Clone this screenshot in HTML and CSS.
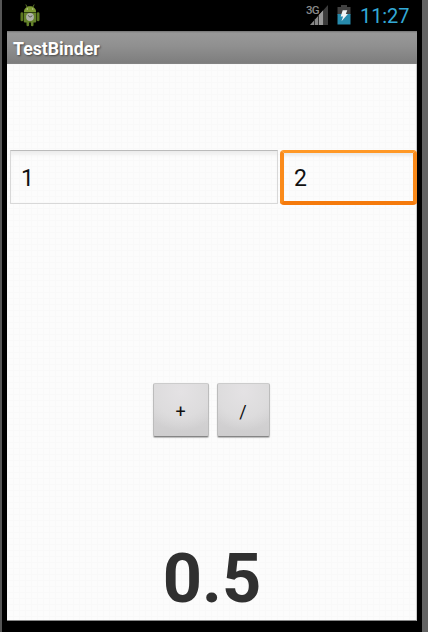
FILE: index.html
```html
<!DOCTYPE html>
<html lang="en">
<head>
<meta charset="utf-8">
<title>TestBinder</title>
<link rel="stylesheet" href="styles.css">
</head>
<body>
<div class="device">
  <header class="status">
    <svg class="robot" width="20" height="24" viewBox="0 0 20 24">
      <path d="M5.800 .5l1.500 3M14.200 .5l-1.500 3" stroke="#5c7228" stroke-width="1"/>
      <path d="M4 7.900C4 .5 16 .5 16 7.900z" fill="#7d9a33"/>
      <circle cx="7.300" cy="5" r=".7" fill="#c0cba6"/><circle cx="12.700" cy="5" r=".7" fill="#c0cba6"/>
      <rect x="0.500" y="8.300" width="2.800" height="9" rx="1.400" fill="#5b7720"/>
      <rect x="16.700" y="8.300" width="2.800" height="9" rx="1.400" fill="#5b7720"/>
      <path d="M3.800 8.500h12.400v9q0 1-1 1h-1.700v2.500q0 1.300-1.300 1.300t-1.300-1.300v-2.500h-1.800v2.500q0 1.300-1.300 1.300t-1.300-1.300v-2.500H4.800q-1 0-1-1z" fill="#64822a"/>
      <circle cx="10" cy="13" r="3.900" fill="#b0b2aa"/>
      <path d="M7.800 11.200l2.200 2 2.300-1.500" fill="none" stroke="#555950" stroke-width="1"/>
    </svg>
    <div class="indicators">
      <span class="network">3G</span>
      <svg class="signal" width="19" height="21" viewBox="0 0 19 21">
        <path d="M0 20L13.500 5V20z" fill="#888"/>
        <path d="M13.500 5L18 0V20H13.500z" fill="#3b3b3b"/>
        <path d="M9 10L13 5.500V20H9z" fill="#999"/>
        <path d="M4.500 14.500v5.500M8.500 10v10" stroke="#333" stroke-width="1"/>
      </svg>
      <svg class="battery" width="14" height="20" viewBox="0 0 14 20">
        <path d="M4 0h6v2h3.500v8H.5V2H4z" fill="#414141"/>
        <path d="M.5 9h13v10.500H.5z" fill="#278bad"/>
        <path d="M5.700 5.200h4.600L8.800 9h2.100L4.500 16.300l1.600-4.800H3.700z" fill="#f1f4f5"/>
      </svg>
      <span class="clock">11:27</span>
    </div>
  </header>
  <h1 class="title">TestBinder</h1>
  <main class="content">
    <div class="fields">
      <div class="field first">1</div>
      <div class="field focused">2</div>
    </div>
    <div class="buttons">
      <button class="plus">+</button>
      <button class="divide">/</button>
    </div>
    <div class="result">0.5</div>
  </main>
</div>
</body>
</html>
```
FILE: styles.css
```css
* { box-sizing: border-box; }
body { margin: 0; background: #000; font-family: Roboto, sans-serif; }
.device {
  width: 428px; height: 632px; overflow: hidden;
  border-left: 2px solid #565656; border-right: 6px solid #626262;
  background: #000; padding: 0 5px;
}
.status { height: 31px; display: flex; justify-content: space-between; padding: 4px 7px 0 13px; }
.robot { display: block; }
.indicators { display: flex; color: #33a9d6; }
.network { font-size: 11.500px; font-weight: 500; line-height: 12px; color: #898989; width: 14px; letter-spacing: -.7px; white-space: nowrap; margin-right: -10px; }
.signal { margin: 1px 8px 0 0; }
.battery { margin: 1px 9px 0 0; }
.clock { font-size: 20px; line-height: 25px; width: 50px; white-space: nowrap; letter-spacing: -.1px; }
.title {
  width: 410px; height: 33px; margin: 0; padding-left: 6px;
  font-size: 17.700px; line-height: 36px; color: #fff; font-weight: 700;
  background: linear-gradient(#747474 0, #989898 2px, #909090 45%, #7e7e7e 96%, #868686);
  text-shadow: 1px 1px 2px #444;
}
.content {
  width: 410px; height: 557px; padding-top: 86px;
  background-color: #fcfcfc;
  background-image: linear-gradient(90deg, #f9f9f9 1px, transparent 1px), linear-gradient(#f9f9f9 1px, transparent 1px);
  background-size: 6px 6px;
  border-bottom: 1px solid #888; border-right: 1px solid #ccc;
}
.fields { display: flex; gap: 2px; padding-left: 3px; width: 410px; height: 55px; }
.field { font-size: 23px; line-height: 55px; color: #111; }
.first {
  width: 268px; height: 54px; padding-left: 10px;
  border: 1px solid #d8d8d8; border-top-color: #bbb;
  box-shadow: inset 0 5px 4px -2px #ebebeb;
}
.focused {
  width: 137px; height: 55px; padding-left: 10px; line-height: 51px;
  border: 4px solid; border-width: 3px 4px 4px; border-color: #ff9826 #fa8a1a #f57a0c #fa8a1a;
  border-radius: 4px; box-shadow: inset 0 4px 3px -1px #ebebeb;
}
.buttons { display: flex; justify-content: center; gap: 8px; margin-top: 178px; }
button {
  height: 54px; padding: 3px 1px 0 0; border: 1px solid #bcbcbc; border-top-color: #ccc; border-bottom-color: #858585; border-radius: 2px;
  font: 18px Roboto, sans-serif; color: #111;
  background: radial-gradient(ellipse 75% 75% at 50% 15%, #e4e2e4 0, #dddcdd 65%, transparent 100%), linear-gradient(#dcdbdc, #cecdce);
  box-shadow: 0 1px 1px #bbb;
}
.plus { width: 56px; }
.divide { width: 53px; }
.result { margin-top: 102px; padding-left: 1px; height: 80px; text-align: center; font-size: 68.500px; line-height: 80px; font-weight: 700; color: #303030; }
```
